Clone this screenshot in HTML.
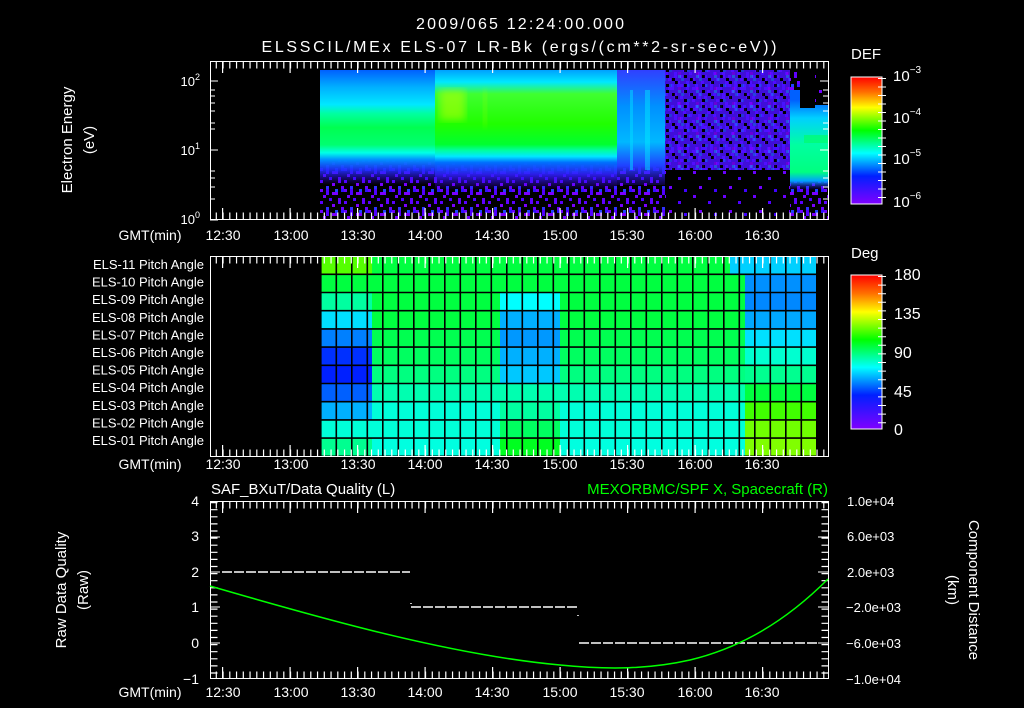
<!DOCTYPE html>
<html><head><meta charset="utf-8"><style>
html,body{margin:0;padding:0;background:#000;width:1024px;height:708px;overflow:hidden}
svg{display:block}
text{font-family:"Liberation Sans",sans-serif;fill:#fff}
</style></head><body>
<svg width="1024" height="708" viewBox="0 0 1024 708" xmlns="http://www.w3.org/2000/svg">
<defs>
<linearGradient id="cb" x1="0" y1="0" x2="0" y2="1">
<stop offset="0" stop-color="#ff0000"/><stop offset="0.12" stop-color="#ff7000"/><stop offset="0.24" stop-color="#ffff00"/><stop offset="0.42" stop-color="#00ff00"/><stop offset="0.6" stop-color="#00ffff"/><stop offset="0.78" stop-color="#0020ff"/><stop offset="1" stop-color="#8000ff"/>
</linearGradient>
<filter id="bl"><feGaussianBlur stdDeviation="4"/></filter>
<pattern id="spk" x="320" y="0" width="24" height="21" patternUnits="userSpaceOnUse">
<rect width="24" height="21" fill="#000"/>
<rect x="0" y="0" width="3" height="3" fill="#6a00ff"/><rect x="6" y="0" width="3" height="6" fill="#5000ff"/><rect x="12" y="3" width="6" height="3" fill="#7a00ff"/><rect x="21" y="0" width="3" height="3" fill="#3010ff"/>
<rect x="3" y="6" width="3" height="3" fill="#7000ff"/><rect x="9" y="9" width="3" height="3" fill="#4a00ff"/><rect x="18" y="9" width="3" height="6" fill="#6000ff"/><rect x="0" y="12" width="3" height="3" fill="#5a00ff"/>
<rect x="12" y="15" width="3" height="3" fill="#7a00ff"/><rect x="6" y="18" width="3" height="3" fill="#3030ff"/><rect x="21" y="18" width="3" height="3" fill="#6a00ff"/><rect x="15" y="0" width="3" height="3" fill="#2040ff"/>
</pattern>
<pattern id="spk2" x="0" y="0" width="30" height="24" patternUnits="userSpaceOnUse">
<rect width="30" height="24" fill="#000"/>
<rect x="3" y="3" width="3" height="3" fill="#6a00ff"/><rect x="18" y="9" width="3" height="3" fill="#5000ff"/><rect x="9" y="18" width="3" height="3" fill="#7000ff"/><rect x="24" y="21" width="3" height="3" fill="#4000ff"/>
</pattern>
<pattern id="spk3" x="0" y="0" width="18" height="15" patternUnits="userSpaceOnUse">
<rect width="18" height="15" fill="#4a10ff"/>
<rect x="0" y="0" width="3" height="3" fill="#000"/><rect x="9" y="6" width="3" height="3" fill="#000"/><rect x="3" y="9" width="3" height="3" fill="#2a40ff"/><rect x="12" y="12" width="3" height="3" fill="#7a00ff"/><rect x="15" y="3" width="3" height="3" fill="#2a50ff"/><rect x="6" y="3" width="3" height="3" fill="#000"/><rect x="12" y="0" width="3" height="3" fill="#3060ff"/><rect x="0" y="9" width="3" height="3" fill="#000"/>
</pattern>
<linearGradient id="gA" x1="0" y1="70" x2="0" y2="185" gradientUnits="userSpaceOnUse">
<stop offset="0" stop-color="#0060ff"/><stop offset="0.15" stop-color="#00b0ff"/><stop offset="0.3" stop-color="#00e8ff"/><stop offset="0.38" stop-color="#00ffa0"/><stop offset="0.5" stop-color="#00ff50"/><stop offset="0.65" stop-color="#00ff70"/><stop offset="0.72" stop-color="#00ffe8"/><stop offset="0.78" stop-color="#0090ff"/><stop offset="0.87" stop-color="#2030ff" stop-opacity="0.9"/><stop offset="1" stop-color="#4000ff" stop-opacity="0"/>
</linearGradient>
<linearGradient id="gB" x1="0" y1="70" x2="0" y2="190" gradientUnits="userSpaceOnUse">
<stop offset="0" stop-color="#00a0ff"/><stop offset="0.1" stop-color="#00e8ff"/><stop offset="0.2" stop-color="#40ff30"/><stop offset="0.45" stop-color="#20ff00"/><stop offset="0.62" stop-color="#00ff30"/><stop offset="0.67" stop-color="#00ffa0"/><stop offset="0.72" stop-color="#00e8ff"/><stop offset="0.77" stop-color="#0070ff"/><stop offset="0.87" stop-color="#3020ff" stop-opacity="0.9"/><stop offset="1" stop-color="#4000ff" stop-opacity="0"/>
</linearGradient>
<linearGradient id="gC" x1="0" y1="70" x2="0" y2="190" gradientUnits="userSpaceOnUse">
<stop offset="0" stop-color="#3040ff"/><stop offset="0.3" stop-color="#0090ff"/><stop offset="0.6" stop-color="#00b8ff"/><stop offset="0.8" stop-color="#2040ff"/><stop offset="1" stop-color="#4000ff" stop-opacity="0"/>
</linearGradient>
<linearGradient id="gE" x1="0" y1="100" x2="0" y2="190" gradientUnits="userSpaceOnUse">
<stop offset="0" stop-color="#0060ff"/><stop offset="0.2" stop-color="#00d0ff"/><stop offset="0.5" stop-color="#00ffa0"/><stop offset="0.8" stop-color="#00ff80"/><stop offset="0.9" stop-color="#00a0ff"/><stop offset="1" stop-color="#4000ff" stop-opacity="0"/>
</linearGradient>
</defs>

<text x="520" y="29" font-size="16" text-anchor="middle" textLength="208">2009/065 12:24:00.000</text>
<text x="519" y="52" font-size="16" text-anchor="middle" textLength="515">ELSSCIL/MEx ELS-07 LR-Bk  (ergs/(cm**2-sr-sec-eV))</text>

<!-- Panel 1 -->
<rect x="320" y="70" width="508" height="150" fill="url(#spk)"/>
<rect x="665" y="70" width="125" height="100" fill="url(#spk3)" opacity="0.85"/>
<rect x="665" y="170" width="125" height="50" fill="url(#spk2)"/>
<rect x="320" y="70" width="115" height="115" fill="url(#gA)"/>
<rect x="435" y="70" width="182" height="120" fill="url(#gB)"/>
<rect x="440" y="90" width="25" height="30" fill="#c8ff00" opacity="0.5" filter="url(#bl)"/>
<rect x="483" y="90" width="4" height="36" fill="#b0ff00" opacity="0.4" filter="url(#bl)"/>
<rect x="617" y="70" width="48" height="115" fill="url(#gC)"/>
<rect x="630" y="90" width="3" height="80" fill="#00e0ff" opacity="0.5"/>
<rect x="645" y="90" width="5" height="80" fill="#00f0ff" opacity="0.45"/>
<rect x="790" y="90" width="38" height="100" fill="url(#gE)"/>
<rect x="800" y="70" width="15" height="38" fill="#000"/>
<rect x="815" y="70" width="13" height="35" fill="url(#spk2)"/>
<rect x="804" y="135" width="24" height="8" fill="#00ff60" opacity="0.6"/>

<g stroke="#fff" fill="none">
<rect x="210.5" y="61.5" width="618" height="158"/>
<line x1="215.7" y1="65" x2="828" y2="65" stroke-width="7" stroke-dasharray="1.2 5.55"/>
<line x1="215.7" y1="216" x2="828" y2="216" stroke-width="7" stroke-dasharray="1.2 5.55"/>
<line x1="222" y1="67" x2="828" y2="67" stroke-width="12" stroke-dasharray="1.2 66.3"/>
<line x1="222" y1="214" x2="828" y2="214" stroke-width="12" stroke-dasharray="1.2 66.3"/>
<path d="M210 81h8M210 150h8M210 220h8M210 90h5M210 96h5M210 103h5M210 111h5M210 123h5M210 129h5M210 171h5M210 178h5M210 187h5M210 199h5M828 81h-8M828 150h-8M828 90h-5M828 96h-5M828 103h-5M828 111h-5M828 123h-5M828 129h-5M828 171h-5M828 178h-5M828 187h-5M828 199h-5"/>
</g>
<text x="200" y="86" font-size="13" text-anchor="end">10<tspan dy="-6" font-size="9">2</tspan></text>
<text x="200" y="155" font-size="13" text-anchor="end">10<tspan dy="-6" font-size="9">1</tspan></text>
<text x="200" y="224" font-size="13" text-anchor="end">10<tspan dy="-6" font-size="9">0</tspan></text>
<text transform="translate(72,140) rotate(-90)" font-size="15" text-anchor="middle">Electron Energy</text>
<text transform="translate(94,140) rotate(-90)" font-size="15" text-anchor="middle">(eV)</text>
<g font-size="14" text-anchor="middle">
<text x="150" y="240">GMT(min)</text>
<text x="223" y="240">12:30</text><text x="291" y="240">13:00</text><text x="358" y="240">13:30</text><text x="425" y="240">14:00</text><text x="492" y="240">14:30</text><text x="560" y="240">15:00</text><text x="627" y="240">15:30</text><text x="695" y="240">16:00</text><text x="762" y="240">16:30</text>
</g>
<text x="851" y="59" font-size="15">DEF</text>
<rect x="851" y="77" width="31" height="127" fill="url(#cb)" stroke="#fff"/>
<g stroke="#fff"><line x1="882" y1="78" x2="882" y2="204" stroke-width="8" stroke-dasharray="1 7.5"/></g>
<g font-size="15"><text x="893" y="81">10<tspan dy="-8" font-size="10">−3</tspan></text><text x="893" y="123">10<tspan dy="-8" font-size="10">−4</tspan></text><text x="893" y="164">10<tspan dy="-8" font-size="10">−5</tspan></text><text x="893" y="207">10<tspan dy="-8" font-size="10">−6</tspan></text></g>

<!-- Panel 2 -->
<g>
<rect x="320" y="256" width="496" height="18.2" fill="#00ff40"/><rect x="320" y="256" width="52" height="18.2" fill="#55ff00"/><rect x="730" y="256" width="86" height="18.2" fill="#00d0ff"/>
<rect x="320" y="274.2" width="496" height="18.2" fill="#00ff40"/><rect x="745" y="274.2" width="71" height="18.2" fill="#0090ff"/>
<rect x="320" y="292.4" width="496" height="18.2" fill="#00ff40"/><rect x="320" y="292.4" width="52" height="18.2" fill="#00ffa0"/><rect x="500" y="292.4" width="60" height="18.2" fill="#00ffff"/><rect x="745" y="292.4" width="71" height="18.2" fill="#0088ff"/>
<rect x="320" y="310.6" width="496" height="18.2" fill="#00ff40"/><rect x="320" y="310.6" width="52" height="18.2" fill="#00e0ff"/><rect x="500" y="310.6" width="60" height="18.2" fill="#00b0ff"/><rect x="745" y="310.6" width="71" height="18.2" fill="#00a8ff"/>
<rect x="320" y="328.8" width="496" height="18.2" fill="#00ff50"/><rect x="320" y="328.8" width="52" height="18.2" fill="#0080ff"/><rect x="500" y="328.8" width="60" height="18.2" fill="#0098ff"/><rect x="745" y="328.8" width="71" height="18.2" fill="#00e0ff"/>
<rect x="320" y="347" width="496" height="18.2" fill="#00ff60"/><rect x="320" y="347" width="52" height="18.2" fill="#0030ff"/><rect x="500" y="347" width="60" height="18.2" fill="#00b0ff"/><rect x="745" y="347" width="71" height="18.2" fill="#00ffd0"/>
<rect x="320" y="365.2" width="496" height="18.2" fill="#00ff80"/><rect x="320" y="365.2" width="52" height="18.2" fill="#0020ff"/><rect x="500" y="365.2" width="60" height="18.2" fill="#00c8ff"/><rect x="745" y="365.2" width="71" height="18.2" fill="#00ff90"/>
<rect x="320" y="383.4" width="496" height="18.2" fill="#00ffb0"/><rect x="320" y="383.4" width="52" height="18.2" fill="#0060ff"/><rect x="745" y="383.4" width="71" height="18.2" fill="#00ff40"/>
<rect x="320" y="401.6" width="496" height="18.2" fill="#00ffd8"/><rect x="320" y="401.6" width="52" height="18.2" fill="#00b0ff"/><rect x="500" y="401.6" width="60" height="18.2" fill="#00ffa0"/><rect x="745" y="401.6" width="71" height="18.2" fill="#40ff00"/>
<rect x="320" y="419.8" width="496" height="18.2" fill="#00ffd8"/><rect x="500" y="419.8" width="60" height="18.2" fill="#00ff60"/><rect x="745" y="419.8" width="71" height="18.2" fill="#70ff00"/>
<rect x="320" y="438" width="496" height="18" fill="#00ffe0"/><rect x="320" y="438" width="52" height="18" fill="#00ff90"/><rect x="500" y="438" width="60" height="18" fill="#00ff20"/><rect x="745" y="438" width="71" height="18" fill="#80ff00"/>
</g>
<g stroke="#000">
<line x1="320" y1="356" x2="817" y2="356" stroke-width="200" stroke-dasharray="1.6 13.9"/>
<line x1="568" y1="273.5" x2="568" y2="456" stroke-width="496" stroke-dasharray="1.6 16.6"/>
</g>
<g stroke="#fff" fill="none">
<rect x="210.5" y="256.5" width="618" height="200"/>
<line x1="215.7" y1="260" x2="828" y2="260" stroke-width="7" stroke-dasharray="1.2 5.55"/>
<line x1="215.7" y1="453" x2="828" y2="453" stroke-width="7" stroke-dasharray="1.2 5.55"/>
<line x1="222" y1="262" x2="828" y2="262" stroke-width="12" stroke-dasharray="1.2 66.3"/>
<line x1="222" y1="451" x2="828" y2="451" stroke-width="12" stroke-dasharray="1.2 66.3"/>
</g>
<g font-size="13" text-anchor="end">
<text x="204" y="269">ELS-11 Pitch Angle</text><text x="204" y="286.6">ELS-10 Pitch Angle</text><text x="204" y="304.2">ELS-09 Pitch Angle</text><text x="204" y="321.8">ELS-08 Pitch Angle</text><text x="204" y="339.4">ELS-07 Pitch Angle</text><text x="204" y="357">ELS-06 Pitch Angle</text><text x="204" y="374.6">ELS-05 Pitch Angle</text><text x="204" y="392.2">ELS-04 Pitch Angle</text><text x="204" y="409.8">ELS-03 Pitch Angle</text><text x="204" y="427.4">ELS-02 Pitch Angle</text><text x="204" y="445">ELS-01 Pitch Angle</text>
</g>
<g font-size="14" text-anchor="middle">
<text x="150" y="469">GMT(min)</text>
<text x="223" y="469">12:30</text><text x="291" y="469">13:00</text><text x="358" y="469">13:30</text><text x="425" y="469">14:00</text><text x="492" y="469">14:30</text><text x="560" y="469">15:00</text><text x="627" y="469">15:30</text><text x="695" y="469">16:00</text><text x="762" y="469">16:30</text>
</g>
<text x="851" y="258" font-size="15">Deg</text>
<rect x="851" y="275" width="31" height="154" fill="url(#cb)" stroke="#fff"/>
<g stroke="#fff"><line x1="882" y1="276" x2="882" y2="429" stroke-width="8" stroke-dasharray="1 7.6"/></g>
<g font-size="16"><text x="894" y="280">180</text><text x="894" y="319">135</text><text x="894" y="358">90</text><text x="894" y="397">45</text><text x="894" y="435">0</text></g>

<!-- Panel 3 -->
<text x="211" y="494" font-size="15">SAF_BXuT/Data Quality (L)</text>
<text x="828" y="494" font-size="15" text-anchor="end" style="fill:#00ff00">MEXORBMC/SPF X, Spacecraft (R)</text>
<g stroke="#fff" fill="none">
<rect x="210.5" y="501.5" width="618" height="177"/>
<line x1="215.7" y1="505" x2="828" y2="505" stroke-width="7" stroke-dasharray="1.2 5.55"/>
<line x1="215.7" y1="675" x2="828" y2="675" stroke-width="7" stroke-dasharray="1.2 5.55"/>
<line x1="222" y1="507" x2="828" y2="507" stroke-width="12" stroke-dasharray="1.2 66.3"/>
<line x1="222" y1="673" x2="828" y2="673" stroke-width="12" stroke-dasharray="1.2 66.3"/>
<line x1="214" y1="502" x2="214" y2="679" stroke-width="7" stroke-dasharray="1.2 5.9"/>
<line x1="825" y1="502" x2="825" y2="679" stroke-width="7" stroke-dasharray="1.2 5.9"/>
<path d="M210 537h10M210 572h10M210 607h10M210 643h10M828 537h-10M828 572h-10M828 607h-10M828 643h-10"/>
<path stroke-width="1.5" stroke-dasharray="10 2" d="M222 572H410M411 607H578M579 643H817"/>
<path stroke-width="1.5" d="M411 603v1M578 615v1"/>
</g>
<path d="M210 586 C 320 618, 450 655, 560 665 C 610 670, 650 669, 690 660 C 740 648, 785 622, 828 579" stroke="#00ff00" stroke-width="1.5" fill="none"/>
<g font-size="14" text-anchor="end">
<text x="199" y="506">4</text><text x="199" y="541">3</text><text x="199" y="577">2</text><text x="199" y="612">1</text><text x="199" y="648">0</text><text x="199" y="684">−1</text>
</g>
<g font-size="13">
<text x="847" y="506">1.0e+04</text><text x="847" y="541">6.0e+03</text><text x="847" y="577">2.0e+03</text><text x="846" y="612">−2.0e+03</text><text x="846" y="648">−6.0e+03</text><text x="846" y="684">−1.0e+04</text>
</g>
<text transform="translate(66,590) rotate(-90)" font-size="15" text-anchor="middle">Raw Data Quality</text>
<text transform="translate(88,590) rotate(-90)" font-size="15" text-anchor="middle">(Raw)</text>
<text transform="translate(969,590) rotate(90)" font-size="15" text-anchor="middle">Component Distance</text>
<text transform="translate(948,590) rotate(90)" font-size="15" text-anchor="middle">(km)</text>
<g font-size="14" text-anchor="middle">
<text x="150" y="697">GMT(min)</text>
<text x="223" y="697">12:30</text><text x="291" y="697">13:00</text><text x="358" y="697">13:30</text><text x="425" y="697">14:00</text><text x="492" y="697">14:30</text><text x="560" y="697">15:00</text><text x="627" y="697">15:30</text><text x="695" y="697">16:00</text><text x="762" y="697">16:30</text>
</g>
</svg>
</body></html>
